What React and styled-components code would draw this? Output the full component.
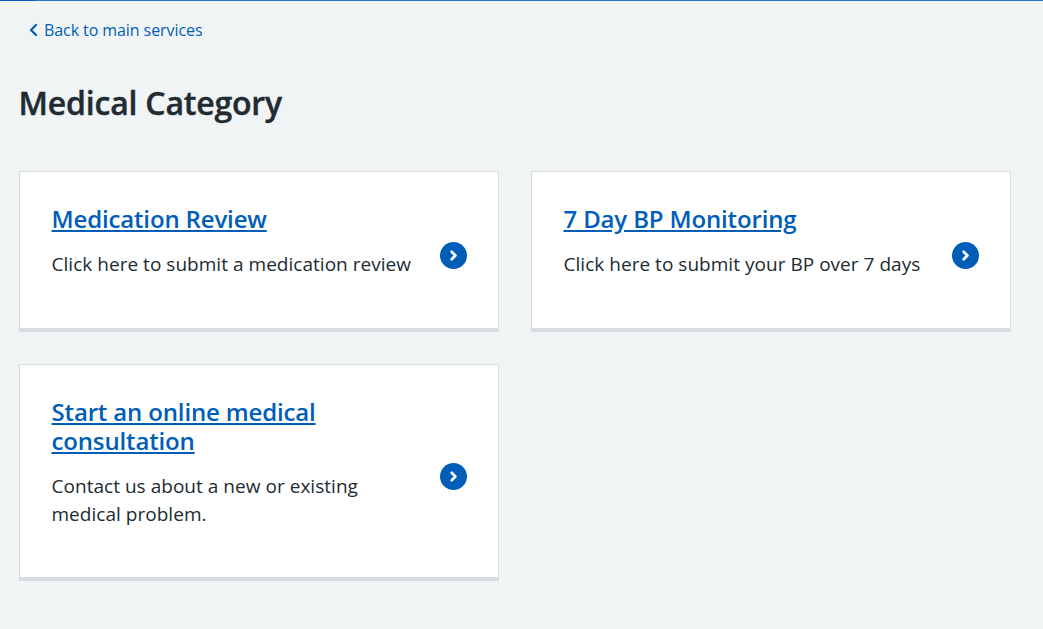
import React from "react";
import styled, { createGlobalStyle } from "styled-components";

const Global = createGlobalStyle`
  html, body { margin: 0; padding: 0; background: #f0f4f5; }
  body { font-family: "Open Sans", "Noto Sans", sans-serif; color: #212b32; }
  * { box-sizing: border-box; }
`;

const Page = styled.div`
  min-height: 629px;
`;

const TopLine = styled.div`
  display: flex;
  height: 1px;
  background: #1d79c9;
`;

const TopLineStart = styled.div`
  width: 35px;
  background: #005eb8;
`;

const Content = styled.div`
  padding: 0 32px 0 19px;
`;

const BackLink = styled.a`
  display: inline-flex;
  align-items: center;
  gap: 6px;
  margin: 18px 0 0 10px;
  height: 22px;
  color: #005eb8;
  font-size: 16px;
  text-decoration: none;
  letter-spacing: -0.08px;
`;

const Title = styled.h1`
  margin: 39px 0 0 -0.5px;
  font-size: 32px;
  line-height: 44px;
  font-weight: 600;
  letter-spacing: -0.2px;
  -webkit-text-stroke: 0.4px #212b32;
`;

const Grid = styled.div`
  display: grid;
  grid-template-columns: repeat(2, 480px);
  gap: 32px;
  align-items: start;
  margin-top: 46px;
`;

const Card = styled.div`
  display: flex;
  align-items: center;
  gap: 27px;
  height: ${(p) => p.$h}px;
  background: #fff;
  border: 1px solid #d8dde0;
  border-bottom: 4px solid #d8dde0;
  padding: 32px 31px 20px 31.5px;
`;

const Body = styled.div`
  flex: 1;
  align-self: flex-start;
`;

const CardTitle = styled.a`
  display: block;
  color: #005eb8;
  font-size: 24px;
  line-height: 29px;
  font-weight: 600;
  text-decoration: underline;
  letter-spacing: -0.15px;
`;

const Desc = styled.p`
  margin: 17px 0 0;
  font-size: 19px;
  line-height: 28px;
  letter-spacing: 0.03px;
`;

const Arrow = styled.svg`
  width: 27px;
  height: 27px;
  flex: none;
  position: relative;
  top: -1px;
`;

const Chevron = () => (
  <Arrow viewBox="0 0 27 27">
    <circle cx="13.5" cy="13.5" r="13.5" fill="#005eb8" />
    <path d="M11.7 9.8l3.7 3.7-3.7 3.7" fill="none" stroke="#fff" strokeWidth="2.7" strokeLinecap="round" strokeLinejoin="round" />
  </Arrow>
);

const cards = [
  { t: "Medication Review", d: "Click here to submit a medication review", h: 161 },
  { t: "7 Day BP Monitoring", d: "Click here to submit your BP over 7 days", h: 161 },
  { t: "Start an online medical consultation", d: "Contact us about a new or existing medical problem.", h: 217 },
];

export default function App() {
  return (
    <Page>
      <Global />
      <TopLine>
        <TopLineStart />
      </TopLine>
      <Content>
        <BackLink href="#">
          <svg width="9" height="14" viewBox="0 0 9 14">
            <path d="M7 2L2 7l5 5" fill="none" stroke="#005eb8" strokeWidth="2.2" strokeLinecap="round" strokeLinejoin="round" />
          </svg>
          Back to main services
        </BackLink>
        <Title>Medical Category</Title>
        <Grid>
          {cards.map((c) => (
            <Card key={c.t} $h={c.h}>
              <Body>
                <CardTitle href="#">{c.t}</CardTitle>
                <Desc>{c.d}</Desc>
              </Body>
              <Chevron />
            </Card>
          ))}
        </Grid>
      </Content>
    </Page>
  );
}
